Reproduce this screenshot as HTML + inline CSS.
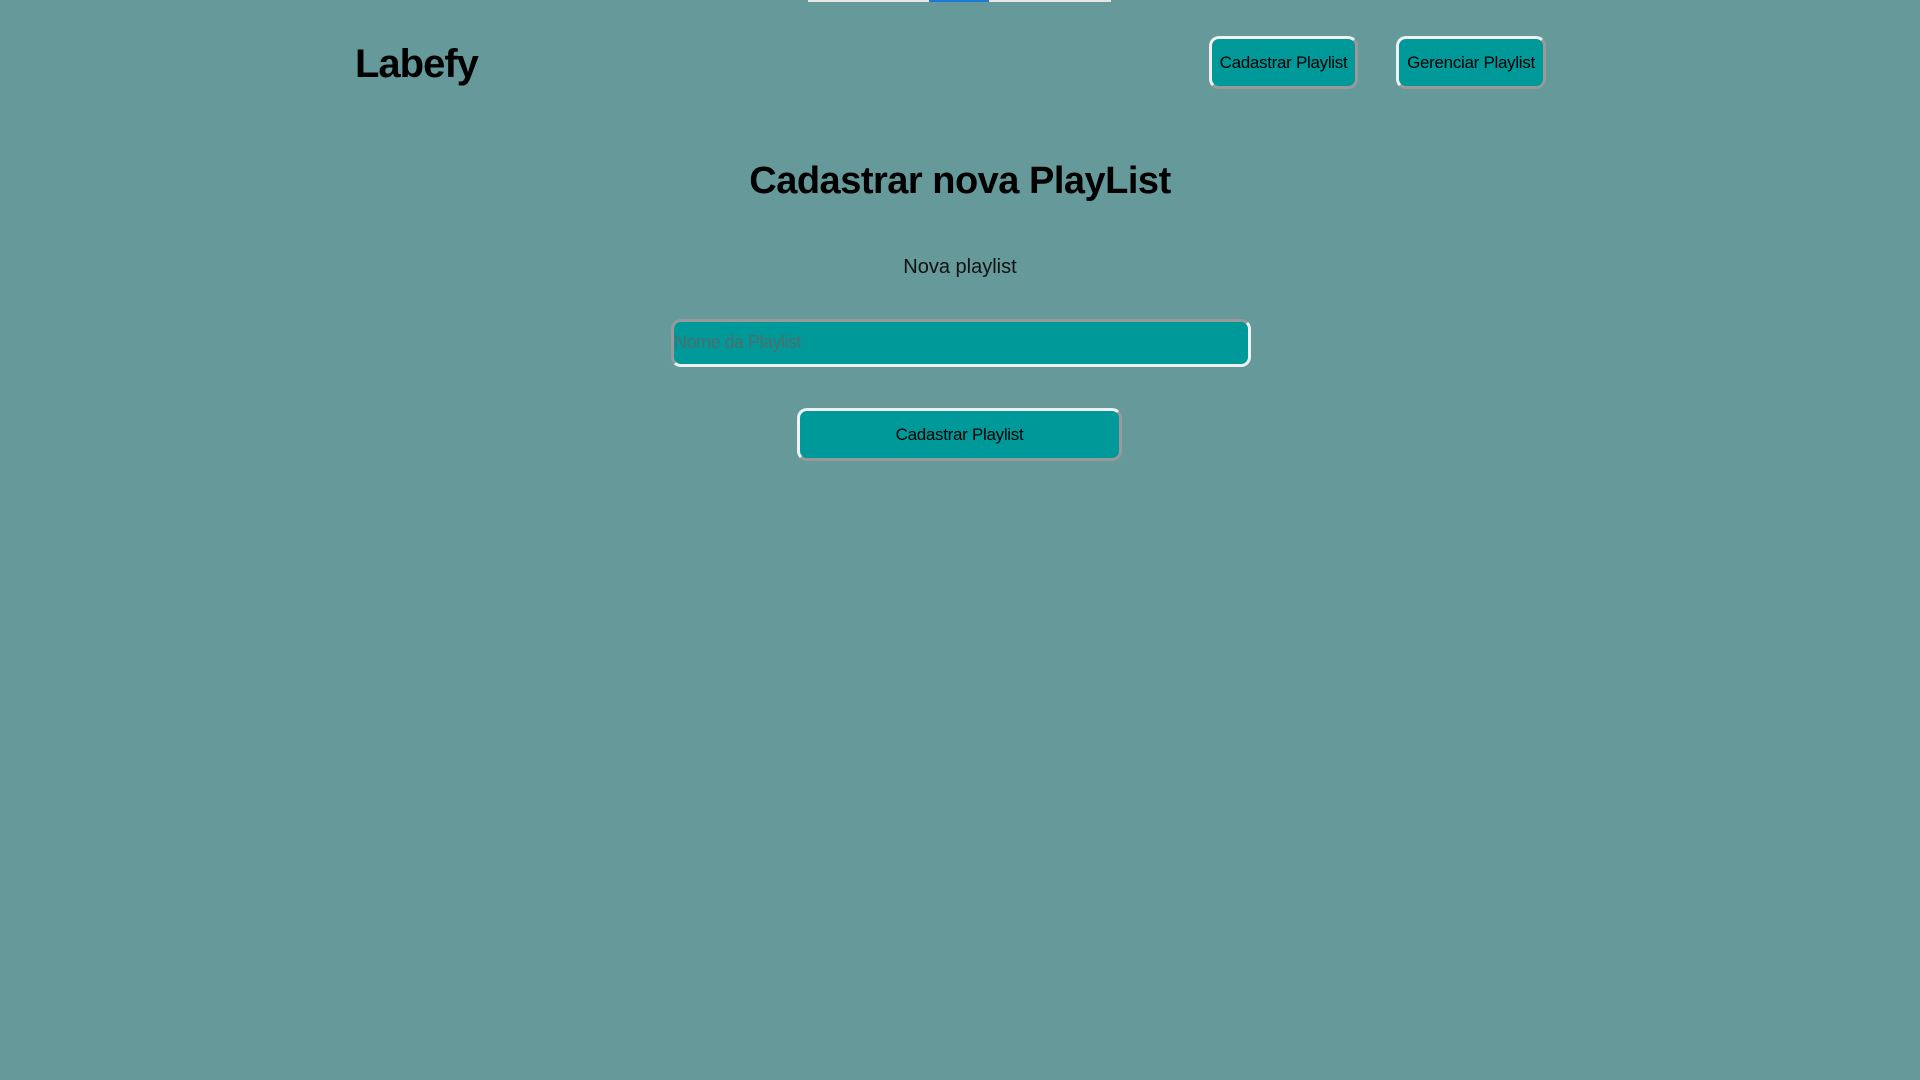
<!DOCTYPE html>
<html><head><meta charset="utf-8"><style>
html,body{margin:0;padding:0;width:1920px;height:1080px;background:#669999;font-family:"Liberation Sans",sans-serif;overflow:hidden;position:relative}
.bar{position:absolute;top:0;left:808px;width:303px;height:2px;background:#e6e6e6}
.bar i{position:absolute;left:121px;width:60px;height:2px;background:#1a7ad6}
.logo{position:absolute;left:355px;top:42px;font-size:40px;font-weight:bold;color:#000;letter-spacing:-1px}
.b{position:absolute;box-sizing:border-box;background:#009999;border:3px solid;border-color:#f0f0f0 #999 #999 #f0f0f0;border-radius:10px;color:#000;font-size:17px;letter-spacing:-0.3px;display:flex;align-items:center;justify-content:center}
h1{position:absolute;top:160px;left:0;width:1920px;text-align:center;margin:0;font-size:38px;font-weight:bold;letter-spacing:-0.5px}
.sub{position:absolute;top:256px;width:1920px;text-align:center;font-size:20px;color:#111}
.in{position:absolute;left:671px;top:319px;width:580px;height:48px;box-sizing:border-box;background:#009999;border:3px solid;border-color:#999 #f0f0f0 #f0f0f0 #999;border-radius:10px;color:#4d6e6e;font-size:18px;line-height:40px;padding-left:0;letter-spacing:-0.5px}
</style></head><body>
<div class="bar"><i></i></div>
<div class="logo">Labefy</div>
<div class="b" style="left:1209px;top:36px;width:149px;height:53px">Cadastrar Playlist</div>
<div class="b" style="left:1396px;top:36px;width:150px;height:53px">Gerenciar Playlist</div>
<h1>Cadastrar nova PlayList</h1>
<div class="sub">Nova playlist</div>
<div class="in">Nome da Playlist</div>
<div class="b" style="left:797px;top:408px;width:325px;height:53px">Cadastrar Playlist</div>
</body></html>
